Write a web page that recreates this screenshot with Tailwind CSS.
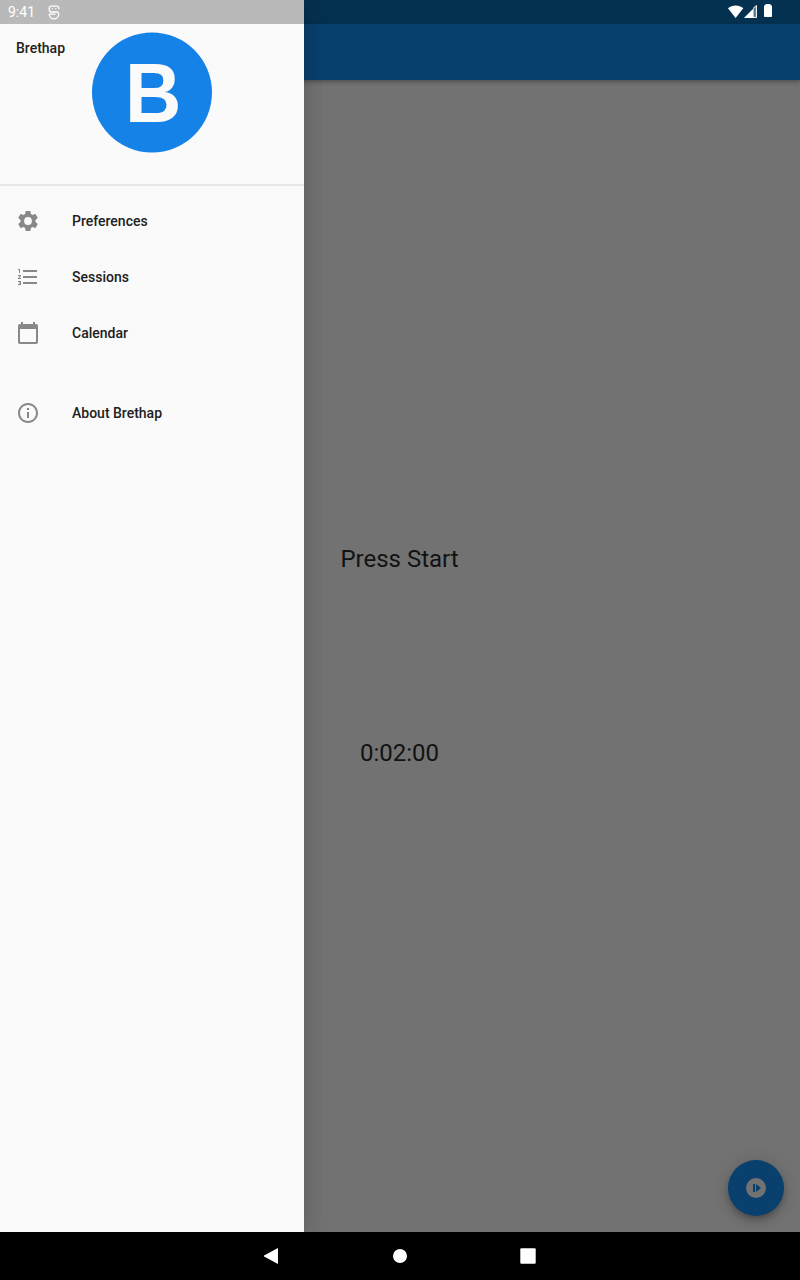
<!DOCTYPE html>
<html lang="en">
<head>
<meta charset="utf-8">
<title>Brethap</title>
<script src="https://cdn.jsdelivr.net/npm/@tailwindcss/browser@4"></script>
</head>
<body class="font-['Roboto',sans-serif]">
<div class="relative flex h-[1280px] w-[800px] flex-col overflow-hidden bg-[#727272]">
  <!-- Status bar, right side -->
  <div class="z-10 flex h-6 shrink-0 justify-end bg-[#053150] pr-7">
    <svg class="h-6 w-12" viewBox="0 0 48 24" fill="#fff">
      <path d="M4 8.3C8.4 4.6 15 4.6 19.3 8.3L11.6 18Z"/>
      <path d="M20 18 33 5V18Z" fill-opacity=".35"/>
      <path d="M20 18 29.5 8.5V18Z"/>
      <path d="M29 8.5 32.4 5.600V17.4H29" fill="none" stroke="#fff" stroke-width="1"/>
      <path d="M41.5 4h5v1.2h.7c.5 0 .8.3.8.8v10.200c0 .5-.3.8-.8.8h-6.400c-.5 0-.8-.3-.8-.8V6c0-.5.3-.8.8-.8h.7z"/>
    </svg>
  </div>
  <!-- App bar -->
  <header class="z-10 h-14 shrink-0 bg-[#0a406e] shadow-[0_2px_4px_rgba(0,0,0,0.3)]"></header>
  <!-- Session -->
  <main class="flex h-[1152px] flex-col items-center pt-[463px] pr-px text-2xl text-[#121212]">
    <p class="h-8 leading-8">Press Start</p>
    <p class="mt-[162px] h-8 leading-8">0:02:00</p>
  </main>
  <button class="absolute top-[1160px] left-[728px] flex size-14 items-center justify-center rounded-full bg-[#0a406e] shadow-[0_3px_5px_-1px_rgba(0,0,0,0.2),0_6px_10px_rgba(0,0,0,0.14),0_1px_18px_rgba(0,0,0,0.12)]" aria-label="Start">
    <svg class="size-6" viewBox="0 0 24 24"><circle cx="12" cy="12" r="10" fill="#727272"/><path d="M9 8h2v8H9zM12 8l5 4-5 4z" fill="#0a406e"/></svg>
  </button>

  <!-- Drawer -->
  <aside class="absolute top-0 left-0 z-20 flex h-[1232px] w-[304px] flex-col bg-[#fafafa] text-sm font-medium text-[#212121] shadow-[0_8px_10px_-5px_rgba(0,0,0,0.08),0_0_24px_2px_rgba(0,0,0,0.12),0_0_24px_rgba(0,0,0,0.05)]">
    <div class="flex h-6 items-center bg-[#b9b9b9] pl-2 font-normal text-white">
      <span class="w-[40px]">9:41</span>
      <svg class="h-[15px] w-3" viewBox="0 0 12 15" fill="none" stroke="#fff" stroke-width="1.3">
        <path d="M10.800 4.300V3.200A2 2 0 0 0 8.800 1.200H3.200A2 2 0 0 0 1.200 3.200V4.800A2.300 2.300 0 0 0 3.500 7H8.500A2 2 0 0 1 10.700 9.200A4.700 4.700 0 0 1 1.300 9.200H7.500"/>
        <path d="M4.200 3v1.300M7.800 3v1.300" stroke-width="1"/>
      </svg>
    </div>
    <div class="flex h-[162px] border-b-2 border-[#e8e8e8] pt-2 pl-4">
      <h1 class="w-[76px] pt-1.5 leading-5">Brethap</h1>
      <svg class="size-[121px]" viewBox="0 0 121 121">
        <circle cx="60" cy="60.5" r="60" fill="#1582e8"/>
        <text transform="translate(33 89.5) scale(.93 1)" font-family="Liberation Sans" font-weight="700" font-size="84" fill="#fafafa">B</text>
      </svg>
    </div>
    <nav class="flex flex-col pt-[7px]">
      <a class="flex h-14 items-center gap-8 px-4">
        <svg class="size-6" viewBox="0 0 24 24" fill="#888"><path d="M19.43 12.98c.04-.32.07-.64.07-.98s-.03-.66-.07-.98l2.11-1.65c.19-.15.24-.42.12-.64l-2-3.46c-.12-.22-.39-.3-.61-.22l-2.49 1c-.52-.4-1.08-.73-1.69-.98l-.38-2.65C14.46 2.18 14.25 2 14 2h-4c-.25 0-.46.18-.49.42l-.38 2.65c-.61.25-1.17.59-1.69.98l-2.49-1c-.23-.09-.49 0-.61.22l-2 3.46c-.13.22-.07.49.12.64l2.11 1.65c-.04.32-.07.65-.07.98s.03.66.07.98l-2.11 1.65c-.19.15-.24.42-.12.64l2 3.46c.12.22.39.3.61.22l2.49-1c.52.4 1.08.73 1.69.98l.38 2.65c.03.24.24.42.49.42h4c.25 0 .46-.18.49-.42l.38-2.65c.61-.25 1.17-.59 1.69-.98l2.49 1c.23.09.49 0 .61-.22l2-3.46c.12-.22.07-.49-.12-.64l-2.11-1.65zM12 15.9A3.900 3.900 0 1 1 12 8.100A3.900 3.900 0 0 1 12 15.900z"/></svg>
        <span>Preferences</span>
      </a>
      <a class="flex h-14 items-center gap-8 px-4">
        <svg class="size-6" viewBox="0 0 24 24" fill="#888"><path d="M2 17h2v.5H3v1h1v.5H2v1h3v-4H2v1zm1-9h1V4H2v1h1v3zm-1 3h1.8L2 13.1v.9h3v-1H3.2L5 10.9V10H2v1zm5-6v2h14V5H7zm0 14h14v-2H7v2zm0-6h14v-2H7v2z"/></svg>
        <span>Sessions</span>
      </a>
      <a class="flex h-14 items-center gap-8 px-4">
        <svg class="size-6" viewBox="0 0 24 24" fill="#888"><path d="M20 3h-1V1h-2v2H7V1H5v2H4c-1.100 0-2 .9-2 2v16c0 1.100.9 2 2 2h16c1.100 0 2-.9 2-2V5c0-1.100-.9-2-2-2zm0 18H4V8h16v13z"/></svg>
        <span>Calendar</span>
      </a>
      <a class="mt-6 flex h-14 items-center gap-8 px-4">
        <svg class="size-6" viewBox="0 0 24 24" fill="#888"><path d="M11 7h2v2h-2zm0 4h2v6h-2zm1-9C6.480 2 2 6.480 2 12s4.480 10 10 10 10-4.480 10-10S17.520 2 12 2zm0 18c-4.410 0-8-3.590-8-8s3.590-8 8-8 8 3.590 8 8-3.590 8-8 8z"/></svg>
        <span>About Brethap</span>
      </a>
    </nav>
  </aside>

  <!-- System navigation -->
  <footer class="z-30 flex h-12 shrink-0 items-center justify-center gap-[104px] bg-black">
    <svg class="size-6" viewBox="0 0 24 24" fill="#fff"><path d="M18 4V20L4 12.500V11.500Z"/></svg>
    <svg class="size-6" viewBox="0 0 24 24" fill="#fff"><circle cx="12" cy="12" r="7"/></svg>
    <svg class="size-6" viewBox="0 0 24 24" fill="#fff"><rect x="4.300" y="4.300" width="15.400" height="15.400" rx="1"/></svg>
  </footer>
</div>
</body>
</html>
